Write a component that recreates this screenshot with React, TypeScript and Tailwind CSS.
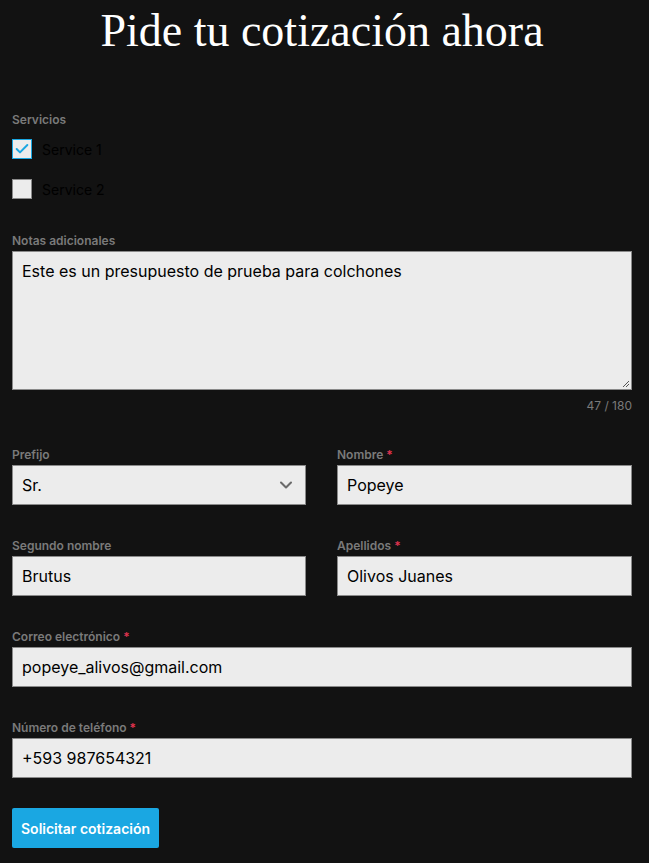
import { Check, ChevronDown } from 'lucide-react';

const Label = ({ text, required }: { text: string; required?: boolean }) => (
    <label className="block text-[12px] font-semibold leading-4 text-[#7a7a7a] mb-[2px]">
        {text}
        {required && <span className="text-[#e0334f]"> *</span>}
    </label>
);

const Field = ({ label, value, required }: { label: string; value: string; required?: boolean }) => (
    <div>
        <Label text={label} required={required} />
        <div className="h-10 border border-[#8a8a8a] bg-[#ececec] px-[9px] flex items-center text-[16px] text-black">
            {value}
        </div>
    </div>
);

export default function App() {
    return (
        <div className="min-h-[863px] bg-[#121212] pl-3 pr-[17px] pb-4" style={{ fontFamily: 'Inter, sans-serif' }}>
            <h1
                className="text-center text-white text-[46px] leading-[62px] font-normal"
                style={{ fontFamily: '"Liberation Serif", serif' }}
            >
                Pide tu cotización ahora
            </h1>

            {/* Servicios */}
            <div className="mt-[50px]">
                <Label text="Servicios" />
                <div className="mt-[11px] flex flex-col gap-5">
                    <div className="flex items-center gap-[10px] h-5">
                        <div className="h-5 w-5 border border-[#1aa7e2] bg-[#ececec] flex items-center justify-center">
                            <Check className="h-4 w-4 text-[#1aa7e2]" strokeWidth={3} />
                        </div>
                        <span className="text-[14px] text-black">Service 1</span>
                    </div>
                    <div className="flex items-center gap-[10px] h-5">
                        <div className="h-5 w-5 border border-[#8a8a8a] bg-[#ececec]" />
                        <span className="text-[14px] text-black">Service 2</span>
                    </div>
                </div>
            </div>

            {/* Notas */}
            <div className="mt-[34px]">
                <Label text="Notas adicionales" />
                <div className="relative h-[139px] border border-[#8a8a8a] bg-[#ececec] px-[9px] pt-[7px] text-[16px] text-black">
                    Este es un presupuesto de prueba para colchones
                    <svg className="absolute right-[1px] bottom-[1px]" width="10" height="10" viewBox="0 0 10 10">
                        <path d="M9 3 L3 9 M9 6 L6 9" stroke="#555" strokeWidth="1" />
                    </svg>
                </div>
                <div className="text-right text-[12px] text-[#7a7a7a] mt-[8px] leading-4">47 / 180</div>
            </div>

            <div className="mt-[33px] grid grid-cols-[294px_1fr] gap-x-[31px] gap-y-[33px]">
                <div>
                    <Label text="Prefijo" />
                    <div className="h-10 border border-[#8a8a8a] bg-[#ececec] px-[9px] flex items-center justify-between text-[16px] text-black">
                        Sr.
                        <ChevronDown className="h-5 w-5 text-[#6b6b6b]" strokeWidth={2.5} />
                    </div>
                </div>
                <Field label="Nombre" value="Popeye" required />
                <Field label="Segundo nombre" value="Brutus" />
                <Field label="Apellidos" value="Olivos Juanes" required />
                <div className="col-span-2">
                    <Field label="Correo electrónico" value="popeye_alivos@gmail.com" required />
                </div>
                <div className="col-span-2">
                    <Field label="Número de teléfono" value="+593 987654321" required />
                </div>
            </div>

            <button className="mt-[30px] h-10 px-[9px] rounded-[2px] bg-[#1aa7e2] text-white text-[14px] font-semibold">
                Solicitar cotización
            </button>
        </div>
    );
}
